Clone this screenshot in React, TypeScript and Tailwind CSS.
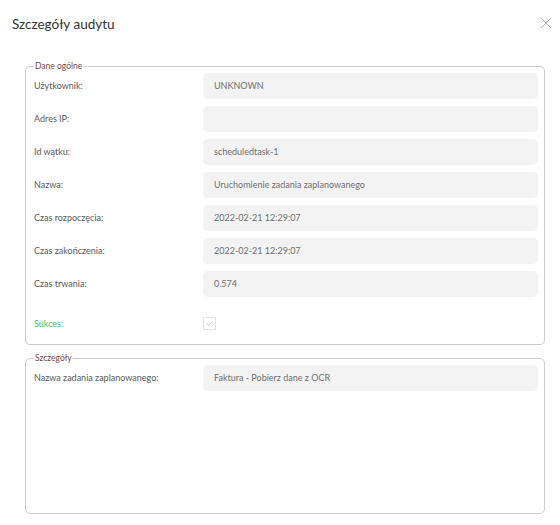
import { X } from "lucide-react";

const rows = [
  { label: "Użytkownik:", value: "UNKNOWN" },
  { label: "Adres IP:", value: "" },
  { label: "Id wątku:", value: "scheduledtask-1" },
  { label: "Nazwa:", value: "Uruchomienie zadania zaplanowanego" },
  { label: "Czas rozpoczęcia:", value: "2022-02-21 12:29:07" },
  { label: "Czas zakończenia:", value: "2022-02-21 12:29:07" },
  { label: "Czas trwania:", value: "0.574" },
];

function Row({ label, value }: { label: string; value: string }) {
  return (
    <div className="flex items-center h-[26px]">
      <div className="w-[169px] shrink-0 text-[9px] text-[#5a5a5a]">{label}</div>
      <div className="flex-1 h-[26px] rounded-[5px] bg-[#f3f3f3] flex items-center pl-[11px] text-[9px] text-[#707070]">
        {value}
      </div>
    </div>
  );
}

export default function App() {
  return (
    <div
      className="w-[560px] h-[525px] bg-white relative overflow-hidden"
      style={{ fontFamily: "Lato, 'Noto Sans', sans-serif" }}
    >
      <div className="flex items-center justify-between h-[48px] pl-[12px] pr-[5px]">
        <h1 className="text-[13.5px] text-[#333]">Szczegóły audytu</h1>
        <X className="size-[18px] text-[#999] -mt-[3px]" strokeWidth={1} />
      </div>

      <div className="pl-[25px] pr-[15px] flex flex-col gap-[8px] mt-[13px]">
        <fieldset className="border border-[#ccc] rounded-[5px] pl-[8px] pr-[6px] pt-[2px] pb-[14px]">
          <legend className="px-[1px] text-[8.5px] leading-[10px] text-[#7b4848]">Dane ogólne</legend>
          <div className="flex flex-col gap-[7px]">
            {rows.map((r) => (
              <Row key={r.label} label={r.label} value={r.value} />
            ))}
            <div className="flex items-center h-[13px] mt-[13px]">
              <div className="w-[169px] shrink-0 text-[9px] text-[#2ecc71]">Sukces:</div>
              <div className="size-[13px] border border-[#e4e4e4] flex items-center justify-center">
                <svg viewBox="0 0 10 10" className="size-[9px]">
                  <path d="M2 5.2 L4 7 L8 3" fill="none" stroke="#aaa" strokeWidth="0.8" />
                </svg>
              </div>
            </div>
          </div>
        </fieldset>

        <fieldset className="border border-[#ccc] rounded-[5px] pl-[8px] pr-[6px] pt-[2px] h-[161px]">
          <legend className="px-[1px] text-[8.5px] leading-[10px] text-[#7b4848]">Szczegóły</legend>
          <Row label="Nazwa zadania zaplanowanego:" value="Faktura - Pobierz dane z OCR" />
        </fieldset>
      </div>
    </div>
  );
}
